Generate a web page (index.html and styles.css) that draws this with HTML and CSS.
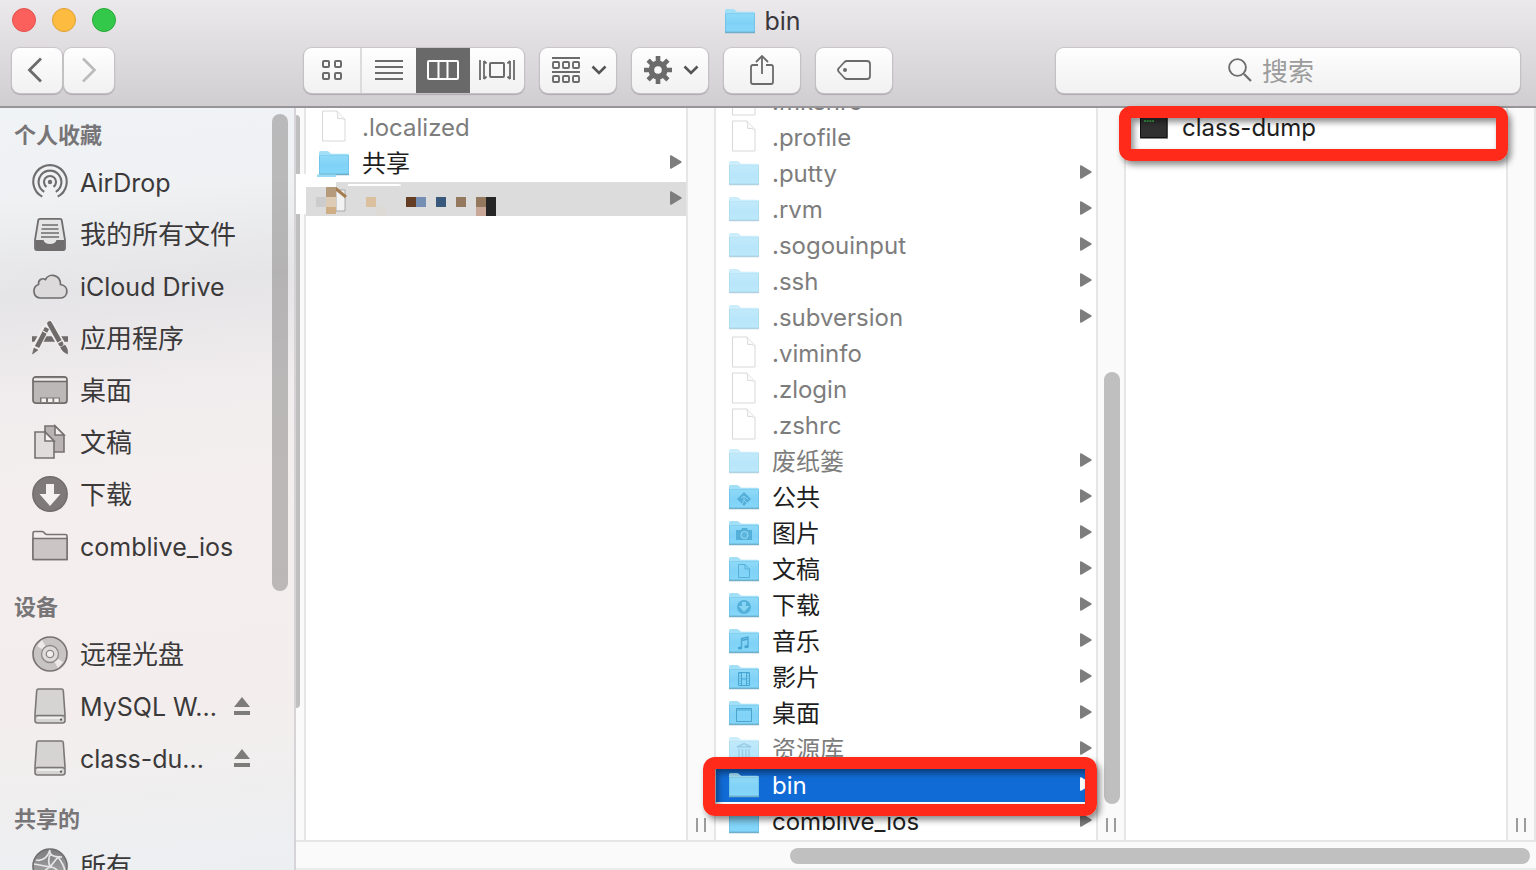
FILE: index.html
```html
<!DOCTYPE html>
<html lang="zh-CN">
<head>
<meta charset="utf-8">
<title>bin</title>
<link rel="stylesheet" href="styles.css">
</head>
<body>
<svg class="defs" aria-hidden="true">
  <defs>
    <linearGradient id="fold" x1="0" y1="0" x2="0" y2="1"><stop offset="0" stop-color="#8fd9f8"/><stop offset=".5" stop-color="#7fd2f6"/><stop offset="1" stop-color="#86d8fa"/></linearGradient>
    <linearGradient id="ball" x1="0" y1="0" x2="0" y2="1"><stop offset="0" stop-color="#7c7c7e"/><stop offset="1" stop-color="#b0b0b2"/></linearGradient>
    <symbol id="folder" viewBox="0 0 30 26">
      <path d="M0 24V2.500Q0 1 1.500 1H8q1 0 1.800.8l1.700 1.500q.6.500 1.500.500h15.500q1.500 0 1.500 1.500V24z" fill="#a3e0f8"/>
      <path d="M0 6h30v17.500q0 1-1 1H1q-1 0-1-1z" fill="url(#fold)"/>
      <path d="M.5 6v18h29V6" fill="none" stroke="#68bde2" stroke-width="1" opacity=".7"/>
      <path d="M0 24.500h30" stroke="#71aeca" stroke-width="1.500"/>
      <path d="M0 5.500h30" stroke="#78cbed" stroke-width=".8"/>
    </symbol>
    <symbol id="file" viewBox="0 0 30 32">
      <path d="M3.500 1h14.500l8 8.500V31H3.500z" fill="#fff" stroke="#d8d8d8"/>
      <path d="M18 1q1 4 .5 7.500 3.500-.5 7.500 1" fill="#fafafa" stroke="#dcdcdc"/>
    </symbol>
    <symbol id="arrow" viewBox="0 0 12 14"><path d="M0 1.200Q0-.2 1.200.3L11.200 6.200q1 .8 0 1.600L1.200 13.700Q0 14.200 0 12.800z" fill="currentColor"/></symbol>
    <symbol id="chev" viewBox="0 0 16 12"><path d="M1.500 2.500 8 9l6.500-6.500" fill="none" stroke="#555" stroke-width="2.600"/></symbol>
    <symbol id="disk" viewBox="0 0 36 36">
      <path d="M6.500 1h23q1.700 0 1.800 1.700L33 26.500v6q0 2.500-2.500 2.500h-25Q3 35 3 32.500v-6L4.700 2.700Q4.800 1 6.500 1z" fill="#d6d3d3" stroke="#7b7777" stroke-width="1.600"/>
      <path d="M3.500 29q.5-1.500 2-1.500h25q1.500 0 2 1.500" fill="none" stroke="#7b7777" stroke-width="1.400"/><path d="M5.500 30h24" stroke="#eee" stroke-width="2"/><circle cx="29" cy="31.700" r="1.100" fill="#555"/>
    </symbol>
    <symbol id="eject" viewBox="0 0 16 18"><path d="M8 0 16 10H0zM0 14h16v4H0z" fill="#7e7b7b"/></symbol>
  </defs>
</svg>
<div class="window">
  <header class="toolbar">
    <div class="titlebar">
      <div class="lights">
        <button class="light close" aria-label="关闭"></button>
        <button class="light mini" aria-label="最小化"></button>
        <button class="light full" aria-label="缩放"></button>
      </div>
      <h1 class="title"><svg class="folder"><use href="#folder"/></svg>bin</h1>
    </div>
    <div class="tools">
      <div class="nav">
        <button class="btn back" aria-label="后退"><svg width="16" height="26" viewBox="0 0 16 26"><path d="M14 1.500 2.500 13 14 24.500" fill="none" stroke="#6b6b6b" stroke-width="2.800"/></svg></button>
        <button class="btn" aria-label="前进"><svg width="16" height="26" viewBox="0 0 16 26"><path d="M2 1.500 13.500 13 2 24.500" fill="none" stroke="#bbb" stroke-width="2.600"/></svg></button>
      </div>
      <div class="views">
        <button class="seg" aria-label="图标"><svg width="20" height="20" viewBox="0 0 20 20" fill="none" stroke="#6b6b6b" stroke-width="2"><rect x="1" y="1" width="6" height="6" rx="1"/><rect x="13" y="1" width="6" height="6" rx="1"/><rect x="1" y="13" width="6" height="6" rx="1"/><rect x="13" y="13" width="6" height="6" rx="1"/></svg></button>
        <button class="seg" aria-label="列表"><svg width="28" height="20" viewBox="0 0 28 20"><path d="M0 1h28M0 7h28M0 13h28M0 19h28" stroke="#6b6b6b" stroke-width="2"/></svg></button>
        <button class="seg on" aria-label="分栏"><svg width="32" height="20" viewBox="0 0 32 20"><path d="M2 1h28q1 0 1 1v16q0 1-1 1H2q-1 0-1-1V2q0-1 1-1zM11.500 1v18M20.500 1v18" fill="none" stroke="#fff" stroke-width="2"/></svg></button>
        <button class="seg" aria-label="Cover Flow"><svg width="36" height="20" viewBox="0 0 36 20" fill="none" stroke="#6b6b6b" stroke-width="2"><path d="M1 0v20M35 0v20" stroke-width="1.800"/><path d="M5 1v18M31 1v18" stroke-width="1.800"/><path d="m5 1 2.500 2.500M5 19l2.500-2.500M31 1l-2.500 2.500M31 19l-2.500-2.500" stroke-width="1.800"/><rect x="11" y="3" width="14" height="14" rx="1"/></svg></button>
      </div>
      <button class="btn wide menu" aria-label="排列"><svg width="28" height="26" viewBox="0 0 28 26" fill="none" stroke="#6b6b6b" stroke-width="1.900"><path d="M0 1h28M0 15h28"/><rect x="1" y="5" width="6" height="6" rx="1"/><rect x="11" y="5" width="6" height="6" rx="1"/><rect x="21" y="5" width="6" height="6" rx="1"/><rect x="1" y="19" width="6" height="6" rx="1"/><rect x="11" y="19" width="6" height="6" rx="1"/><rect x="21" y="19" width="6" height="6" rx="1"/></svg><svg width="16" height="12"><use href="#chev"/></svg></button>
      <button class="btn wide menu" aria-label="操作"><svg width="28" height="28" viewBox="-14 -14 28 28"><path d="M0-14V14M-14 0H14M-9.900-9.900 9.900 9.900M9.900-9.900-9.900 9.900" stroke="#6b6b6b" stroke-width="4.600"/><circle r="9.500" fill="#6b6b6b"/><circle r="3.800" fill="#f8f8f8"/></svg><svg width="16" height="12"><use href="#chev"/></svg></button>
      <button class="btn wide" aria-label="共享"><svg width="24" height="32" viewBox="0 0 24 32" fill="none" stroke="#6b6b6b" stroke-width="1.800"><path d="M8 11H3q-2 0-2 2v15q0 2 2 2h18q2 0 2-2V13q0-2-2-2h-5M12 20V2M6 8l6-6 6 6"/></svg></button>
      <button class="btn wide" aria-label="标记"><svg width="34" height="20" viewBox="0 0 34 20"><path d="M10 1h20q3 0 3 3v12q0 3-3 3H10q-1.500 0-2.500-1L2 12q-2-2 0-4l5.500-6Q8.500 1 10 1z" fill="none" stroke="#6b6b6b" stroke-width="1.800"/><circle cx="8" cy="10" r="2" fill="#6b6b6b"/></svg></button>
      <label class="search"><svg width="24" height="24" viewBox="0 0 24 24"><path d="m16 16 7 7" stroke="#6e6e6e" stroke-width="2.200"/><circle cx="9.500" cy="9.500" r="8.400" fill="none" stroke="#6e6e6e" stroke-width="1.900"/></svg><input type="text" placeholder="搜索" aria-label="搜索"></label>
    </div>
  </header>
  <div class="main">
    <nav class="sidebar">
      <h2 class="group">个人收藏</h2>
      <a class="place latin" href="#"><svg class="ico" viewBox="0 0 36 36" fill="none" stroke="#6f6d6e" stroke-width="2.100"><circle cx="18" cy="18" r="2.200" fill="#6f6d6e" stroke="none"/><path d="M14.500 22.800a6 6 0 1 1 7 0M12.200 27.800a11.400 11.400 0 1 1 11.600 0M10.300 32.600a16.700 16.700 0 1 1 15.400 0"/></svg><span class="name">AirDrop</span></a>
      <a class="place" href="#"><svg class="ico" viewBox="0 0 36 36"><path d="M8 2.800h20q1.500 0 1.700 1.200L33 24v8q0 2-2 2H5q-2 0-2-2v-8L6.300 4Q6.500 2.800 8 2.800z" fill="#e6e5e5" stroke="#6f6d6e" stroke-width="1.800"/><path d="M10 9h16M9.500 13h17M9 17h18M9 21h18" stroke="#6f6d6e" stroke-width="1.700"/><path d="M3.500 24h8q1 4 6.500 4t6.500-4h8v8q0 2-2 2h-25q-2 0-2-2z" fill="#6f6d6e"/></svg><span class="name">我的所有文件</span></a>
      <a class="place latin" href="#"><svg class="ico" viewBox="0 0 36 36"><path d="M8 30a7 7 0 0 1-1.500-13.500C6 12 10 9.500 13.500 11.500 17 4.500 28.500 6.500 28.500 16.500 37.500 17.500 36.500 30 28.500 30z" fill="#dcdada" stroke="#6f6d6e" stroke-width="1.700"/></svg><span class="name">iCloud Drive</span></a>
      <a class="place" href="#"><svg class="ico" viewBox="0 0 36 36" stroke="#6f6b6b"><path d="M0 19h36" stroke-width="5.500"/><path d="M15.500 6 3 29M16 2l17 29" stroke="#efedee" stroke-width="8"/><path d="M15 8 5 27" stroke-width="4.800"/><path d="m17.500 2.500 12 22" stroke="#efedee" stroke-width="7.500"/><path d="m17.500 3.500 11.500 20.500" stroke-width="4.800" stroke-linecap="round"/><path d="M2 28l4 2-5.500 4zM28.500 27.500l4.500-2.500q3.500 4 2.500 9-5-2-7-6.500z" fill="#6f6b6b" stroke-width=".6"/><path d="m11 11 5 3M25 23.500l6-3.500" stroke="#efedee" stroke-width="1.200"/></svg><span class="name">应用程序</span></a>
      <a class="place" href="#"><svg class="ico" viewBox="0 0 36 36"><rect x="1" y="4.800" width="34" height="26.400" rx="3" fill="#bcb8b8" stroke="#6f6b6b" stroke-width="1.700"/><path d="M2 6.500h32v2.300H2z" fill="#f4f1f1"/><path d="M1 9.500h34" stroke="#6f6b6b" stroke-width="1.400"/><path d="M8 25.500h20V30H8z" fill="#7b7777"/><path d="M9.500 26.500H14V30H9.500zM16 26.500h4.500V30H16zM22.200 26.500h4.500V30h-4.500z" fill="#f4f1f1"/></svg><span class="name">桌面</span></a>
      <a class="place" href="#"><svg class="ico" viewBox="0 0 36 36" stroke="#77716f" stroke-width="1.600"><path d="M13 2h10l9 9v17H13z" fill="#b9b4b3"/><path d="M23 2v9h9z" fill="#f4f0ef"/><path d="M3 8h10l9 9v17H3z" fill="#e0dcdb"/><path d="M13 8v9h9z" fill="#f8f5f4"/></svg><span class="name">文稿</span></a>
      <a class="place" href="#"><svg class="ico" viewBox="0 0 36 36"><circle cx="18" cy="18" r="17.200" fill="#7f7979" stroke="#716c6c" stroke-width="1.400"/><path d="M14 8h8v10h6.500L18 30 7.500 18H14z" fill="#f6f1f1"/></svg><span class="name">下载</span></a>
      <a class="place latin" href="#"><svg class="ico" viewBox="0 0 36 36"><path d="M1 30V5q0-1.500 1.500-1.500H10q1 0 1.800.8l1.500 1.600q.6.600 1.700.600h18.500Q35 6.500 35 8v23.500H2.500Q1 31.500 1 30z" fill="#f1eded" stroke="#77716f" stroke-width="1.600"/><path d="M1 10.500h34v21H1z" fill="#cbc6c5" stroke="#77716f" stroke-width="1.500"/></svg><span class="name">comblive_ios</span></a>
      <h2 class="group next">设备</h2>
      <a class="place" href="#"><svg class="ico" viewBox="0 0 36 36"><circle cx="18" cy="18" r="17" fill="#c9c4c4" stroke="#77716f" stroke-width="1.600"/><path d="M18 18 5 10l5-6zM18 18l13 8-5 6z" fill="#eeeaea"/><circle cx="18" cy="18" r="8.500" fill="#dedada" stroke="#8d8787" stroke-width="1.300"/><circle cx="18" cy="18" r="3.700" fill="#f2eeee" stroke="#8d8787" stroke-width="1.300"/></svg><span class="name">远程光盘</span></a>
      <div class="place latin"><svg class="ico"><use href="#disk"/></svg><a class="name" href="#">MySQL W...</a><button class="eject" aria-label="推出"><svg width="16" height="18"><use href="#eject"/></svg></button></div>
      <div class="place latin"><svg class="ico"><use href="#disk"/></svg><a class="name" href="#">class-du...</a><button class="eject" aria-label="推出"><svg width="16" height="18"><use href="#eject"/></svg></button></div>
      <h2 class="group next">共享的</h2>
      <a class="place" href="#"><svg class="ico" viewBox="0 0 36 36"><circle cx="18" cy="18" r="17" fill="url(#ball)" stroke="#6f6d6e" stroke-width="1.600"/><path d="M4 12q10 2 14-10M18 2q-2 7 12 7M19 5q-4 6-1 14l8-10M18 19 2 16M18 19q-8 4-9 12M18 19q8 0 12 12M26 9q6 8 7 14" fill="none" stroke="#e6e6e8" stroke-width="1.700"/></svg><span class="name">所有</span></a>
      <div class="thumb side-thumb"></div>
    </nav>
    <main class="browser">
      <div class="columns">
        <div class="sliver"><div class="sliver-thumb"></div><div class="smudge"></div></div>
        <section class="column">
          <ul class="list top">
            <li class="row dim"><svg class="file"><use href="#file"/></svg><span>.localized</span></li>
            <li class="row"><svg class="folder smeared" viewBox="0 0 30 26"><use href="#folder"/><path d="M-2 24.500h19V27H-2z" fill="#98dcf5"/></svg><span>共享</span><svg class="arrow"><use href="#arrow"/></svg></li>
            <li class="row picked"><svg class="mosaic" viewBox="0 0 190 34"><path d="M0 0h30v5H0z" fill="#fff"/><path d="M42 2h50q3 0 3 2H42z" fill="#fff"/><path d="M30 8h9v21h-9z" fill="#f2f2f2" stroke="#999" stroke-width=".8"/><path d="m29 6 11 9" stroke="#a67d50" stroke-width="3"/><path d="M20 5h10v10H20z" fill="#b59b7c"/><path d="M10 15h10v10H10z" fill="#ccc"/><path d="M20 15h10v10H20z" fill="#decbb6"/><path d="M20 25h10v7H20z" fill="#cfae85"/><path d="M60 15h10v10H60z" fill="#dbc0a0"/><path d="M70 25h10v9H70z" fill="#dddad6"/><path d="M100 15h10v10h-10z" fill="#633d24"/><path d="M110 15h10v10h-10z" fill="#748fb3"/><path d="M130 15h10v10h-10z" fill="#38597b"/><path d="M150 15h10v10h-10zM170 15h10v10h-10z" fill="#94795f"/><path d="M170 25h10v9h-10z" fill="#c9a799"/><path d="M180 15h10v19h-10z" fill="#262626"/></svg><svg class="arrow"><use href="#arrow"/></svg></li>
          </ul>
        </section>
        <div class="gutter"></div>
        <section class="column">
          <ul class="list scrolled">
            <li class="row dim"><svg class="file"><use href="#file"/></svg><span>.mkshrc</span></li>
            <li class="row dim"><svg class="file"><use href="#file"/></svg><span>.profile</span></li>
            <li class="row dim"><svg class="folder"><use href="#folder"/></svg><span>.putty</span><svg class="arrow"><use href="#arrow"/></svg></li>
            <li class="row dim"><svg class="folder"><use href="#folder"/></svg><span>.rvm</span><svg class="arrow"><use href="#arrow"/></svg></li>
            <li class="row dim"><svg class="folder"><use href="#folder"/></svg><span>.sogouinput</span><svg class="arrow"><use href="#arrow"/></svg></li>
            <li class="row dim"><svg class="folder"><use href="#folder"/></svg><span>.ssh</span><svg class="arrow"><use href="#arrow"/></svg></li>
            <li class="row dim"><svg class="folder"><use href="#folder"/></svg><span>.subversion</span><svg class="arrow"><use href="#arrow"/></svg></li>
            <li class="row dim"><svg class="file"><use href="#file"/></svg><span>.viminfo</span></li>
            <li class="row dim"><svg class="file"><use href="#file"/></svg><span>.zlogin</span></li>
            <li class="row dim"><svg class="file"><use href="#file"/></svg><span>.zshrc</span></li>
            <li class="row dim"><svg class="folder"><use href="#folder"/></svg><span>废纸篓</span><svg class="arrow"><use href="#arrow"/></svg></li>
            <li class="row"><svg class="folder" viewBox="0 0 30 26"><use href="#folder"/><path d="m15 8 7 7-7 7-7-7z" fill="#54b0d9"/><path d="m12 14 3-2 2 2 2 1M15 12v4l-2 4M15 16l3 3" fill="none" stroke="#84d1f3"/></svg><span>公共</span><svg class="arrow"><use href="#arrow"/></svg></li>
            <li class="row"><svg class="folder" viewBox="0 0 30 26"><use href="#folder"/><path d="M8 10h4l1-2h5l1 2h4v10H7V10z" fill="#54b0d9"/><circle cx="15.500" cy="15" r="3.600" fill="#5cb6dd" stroke="#9bdcf7"/></svg><span>图片</span><svg class="arrow"><use href="#arrow"/></svg></li>
            <li class="row"><svg class="folder" viewBox="0 0 30 26"><use href="#folder"/><path d="M9.500 8.500H16l4.500 4.500v8.500h-11zM16 8.500V13h4.500" fill="none" stroke="#54b0d9"/></svg><span>文稿</span><svg class="arrow"><use href="#arrow"/></svg></li>
            <li class="row"><svg class="folder" viewBox="0 0 30 26"><use href="#folder"/><circle cx="15" cy="15" r="7" fill="#54b0d9"/><path d="M13 10h4v4h3.500L15 20l-5.500-6H13z" fill="#84d4f5"/></svg><span>下载</span><svg class="arrow"><use href="#arrow"/></svg></li>
            <li class="row"><svg class="folder" viewBox="0 0 30 26"><use href="#folder"/><path d="M12.500 20v-9.500l6.500-1.500v9.500M12.500 12.500 19 11" fill="none" stroke="#48a5d1" stroke-width="1.300"/><ellipse cx="11" cy="20" rx="2.200" ry="1.600" fill="#48a5d1"/><ellipse cx="17.500" cy="18.700" rx="2.200" ry="1.600" fill="#48a5d1"/></svg><span>音乐</span><svg class="arrow"><use href="#arrow"/></svg></li>
            <li class="row"><svg class="folder" viewBox="0 0 30 26"><use href="#folder"/><path d="M9.500 8.500h11v13h-11zM12.500 8.500v13M17.500 8.500v13M12.500 15h5" fill="none" stroke="#48a5d1"/><path d="M11 9v12M19 9v12" stroke="#48a5d1" stroke-dasharray="1 1.500"/></svg><span>影片</span><svg class="arrow"><use href="#arrow"/></svg></li>
            <li class="row"><svg class="folder" viewBox="0 0 30 26"><use href="#folder"/><path d="M7.500 8.500h15v13h-15zM7.500 10h15" fill="none" stroke="#48a5d1"/></svg><span>桌面</span><svg class="arrow"><use href="#arrow"/></svg></li>
            <li class="row dim"><svg class="folder" viewBox="0 0 30 26"><use href="#folder"/><path d="m8 11 7-3.500 7 3.500zM10 13v8M13.500 13v8M17 13v8M20 13v8M8 22h14" fill="none" stroke="#48a5d1" stroke-width="1.400"/></svg><span>资源库</span><svg class="arrow"><use href="#arrow"/></svg></li>
            <li class="row selected"><svg class="folder"><use href="#folder"/></svg><span>bin</span><svg class="arrow"><use href="#arrow"/></svg></li>
            <li class="row"><svg class="folder"><use href="#folder"/></svg><span>comblive_ios</span><svg class="arrow"><use href="#arrow"/></svg></li>
          </ul>
          <div class="mark mark-bin"></div>
        </section>
        <div class="gutter"><div class="thumb col-thumb"></div></div>
        <section class="column">
          <ul class="list top">
            <li class="row"><svg class="file" viewBox="0 0 30 32"><path d="M1 2h28v27H1z" fill="#888"/><path d="M1.500 2h26.500v25.500H1.500z" fill="#303030" stroke="#111"/><path d="M5 11h10" stroke="#3c9e4b" stroke-width="2" stroke-dasharray="2 .7"/></svg><span>class-dump</span></li>
          </ul>
          <div class="mark mark-file"></div>
        </section>
        <div class="gutter"></div>
      </div>
      <div class="hscroll"><div class="hthumb"></div></div>
    </main>
  </div>
</div>
</body>
</html>
```

FILE: styles.css
```css
* { box-sizing: border-box; }
body {
  margin: 0;
  background: #fff;
  font-family: Inter, "Noto Sans CJK SC", sans-serif;
  color: #1e1e1e;
}
button { border: 0; padding: 0; margin: 0; font: inherit; }
a { color: inherit; text-decoration: none; }
svg { flex: none; display: block; }
.defs { position: absolute; width: 0; height: 0; }

.window { height: 100vh; display: flex; flex-direction: column; overflow: hidden; }

.toolbar {
  flex: none;
  height: 108px;
  background: linear-gradient(#ebe9ec, #d1ced1);
  border-bottom: 2px solid #979598;
}
.titlebar {
  display: grid;
  grid-template-columns: 1fr auto 1fr;
  align-items: center;
  height: 40px;
  padding: 0 22px 0 12px;
}
.lights { display: flex; gap: 16px; }
.light { width: 24px; height: 24px; border-radius: 50%; }
.close { background: #fc605c; border: 1px solid #e2504c; }
.mini { background: #fdbc40; border: 1px solid #dea034; }
.full { background: #34c84a; border: 1px solid #27aa35; }
.title {
  margin: 2px 0 0;
  display: flex;
  align-items: center;
  gap: 9px;
  font-size: 25px;
  line-height: 32px;
  font-weight: 400;
  color: #3a373c;
}
.tools { display: flex; align-items: center; gap: 16px; height: 60px; padding: 0 16px 0 12px; }
.nav { display: flex; gap: 2px; margin-right: 174px; }
.btn, .views, .search {
  height: 45px;
  border-radius: 8px;
  background: linear-gradient(#fefefe, #f1f1f1);
  box-shadow: 0 0 1px 1px #c8c5c8, 0 1px 1px 1px #aaa7aa;
}
.btn { display: flex; align-items: center; justify-content: center; gap: 11px; width: 50px; }
.back { padding-right: 5px; }
.wide { width: 76px; }
.menu { padding-left: 3px; }
.views { display: flex; width: 220px; overflow: hidden; }
.seg { flex: 1; display: flex; align-items: center; justify-content: center; background: transparent; }
.seg:first-child { flex: none; width: 58px; border-right: 2px solid #dcdcdc; }
.seg.on { background: #696969; }
.search {
  display: flex;
  align-items: center;
  gap: 10px;
  width: 464px;
  margin-left: auto;
  padding-left: 172px;
}
.search input {
  flex: 1;
  min-width: 0;
  border: 0;
  padding: 3px 0 0;
  background: transparent;
  outline: 0;
  font: inherit;
  font-size: 26px;
  line-height: 40px;
}
.search input::placeholder { color: #9c9c9c; opacity: 1; }

.main { flex: 1; min-height: 0; display: flex; }
.sidebar {
  position: relative;
  flex: none;
  width: 296px;
  padding: 7px 46px 0 14px;
  overflow: hidden;
  border-right: 2px solid #d6d4d6;
  background: linear-gradient(175deg, #f0f3f6 0, #eff1f3 12%, #e5e4e6 24%, #f1edee 38%, #f4efee 50%, #f3eeed 78%, #eceff2 100%);
}
.group {
  margin: 0;
  font-size: 22px;
  line-height: 41px;
  font-weight: 600;
  color: #777577;
}
.next { margin-top: 15px; }
.place {
  display: flex;
  align-items: center;
  height: 52px;
  padding-left: 18px;
  font-size: 26px;
  line-height: 36px;
  color: #3b393a;
}
.latin { font-size: 25px; }
.ico { width: 36px; height: 36px; margin-right: 12px; }
.name { padding-top: 2px; white-space: nowrap; }
.eject { margin-left: auto; margin-right: -2px; background: none; }
.thumb { position: absolute; width: 16px; border-radius: 8px; background: #bfbfbf; }
.side-thumb { top: 6px; right: 6px; height: 477px; background: rgba(140, 138, 138, .55); }

.browser { flex: 1; min-width: 0; display: flex; flex-direction: column; background: #fafafa; }
.columns { flex: 1; min-height: 0; display: flex; }
.sliver { position: relative; flex: none; width: 10px; border-right: 2px solid #e6e6e6; }
.sliver-thumb { position: absolute; left: 0; top: 7px; width: 4px; height: 593px; border-radius: 0 4px 4px 0; background: #bfbfbf; }
.smudge { position: absolute; left: 0; top: 66px; width: 10px; height: 40px; background: #fff; }
.column { position: relative; flex: 1; min-width: 0; background: #fff; }
.list {
  display: flex;
  flex-direction: column;
  gap: 2px;
  margin: 0;
  padding: 0;
  height: 100%;
  overflow: hidden;
  list-style: none;
}
.top { padding-top: 2px; }
.scrolled .row:first-child { margin-top: -24px; }
.row {
  flex: none;
  display: flex;
  align-items: center;
  height: 34px;
  padding: 0 4px 0 13px;
  font-size: 24px;
  line-height: 32px;
  white-space: nowrap;
}
.row span { margin-left: 13px; padding-top: 2px; }
.dim { color: #7d7d7d; }
.dim .folder { opacity: .55; }
.folder { width: 30px; height: 26px; }
.smeared { overflow: visible; }
.file { width: 30px; height: 32px; margin-bottom: 2px; }
.arrow { width: 12px; height: 14px; margin-left: auto; margin-bottom: 2px; color: #7d7d7d; }
.picked { background: #dcdcdc; padding-left: 0; }
.mosaic { width: 190px; height: 34px; }
.selected { background: #116bd6; color: #fff; }
.selected .arrow { color: #fff; }
.gutter {
  position: relative;
  flex: none;
  width: 30px;
  border: solid #e6e6e6;
  border-width: 0 2px;
}
.gutter::after {
  content: "";
  position: absolute;
  box-sizing: border-box;
  left: 8px;
  bottom: 8px;
  width: 10px;
  height: 14px;
  border: solid #9c9c9c;
  border-width: 0 2px;
}
.col-thumb { top: 264px; left: 6px; height: 432px; }
.mark {
  position: absolute;
  z-index: 1;
  border: 12px solid #ff2a1a;
  border-radius: 12px;
  box-shadow: 3px 4px 6px rgba(0, 0, 0, .45), inset 3px 4px 6px rgba(0, 0, 0, .45);
}
.mark-bin { left: -13px; right: -1px; top: 649px; height: 59px; }
.mark-file { left: -7px; right: -2px; top: -2px; height: 55px; }
.hscroll { flex: none; height: 30px; padding: 6px 6px 0 0; border-top: 2px solid #e6e6e6; border-bottom: 2px solid #ececec; }
.hthumb { width: 60%; height: 16px; margin-left: auto; border-radius: 8px; background: #c0c0c0; }
```
